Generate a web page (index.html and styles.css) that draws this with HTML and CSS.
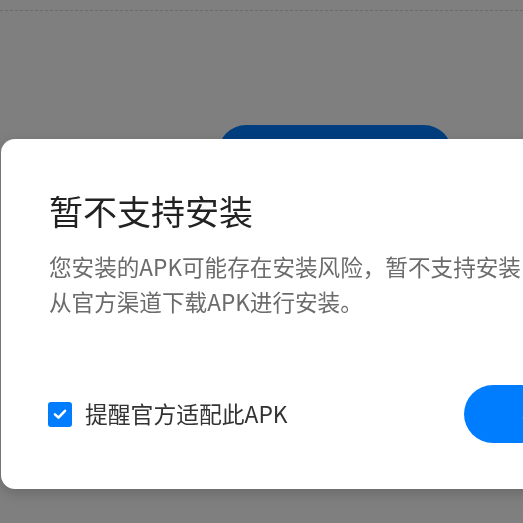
FILE: index.html
```html
<!DOCTYPE html>
<html lang="zh-CN">
<head>
<meta charset="utf-8">
<link rel="stylesheet" href="styles.css">
</head>
<body>
<div class="page">
  <div class="divider"></div>
  <div class="bg-button"></div>
</div>
<div class="overlay"></div>
<div class="dialog">
  <h1 class="title">暂不支持安装</h1>
  <p class="message">
    <span class="line">您安装的APK可能存在安装风险，暂不支持安装，建议您</span>
    <span class="line">从官方渠道下载APK进行安装。</span>
  </p>
  <div class="footer">
    <label class="check">
      <span class="box">
        <svg width="16" height="16" viewBox="0 0 16 16"><path d="M3 8.4 L6.5 11.6 L13 4.8" fill="none" stroke="#fff" stroke-width="2.6" stroke-linecap="round" stroke-linejoin="round"/></svg>
      </span>
      <span class="check-label">提醒官方适配此APK</span>
    </label>
    <button class="primary">我知道了</button>
  </div>
</div>
</body>
</html>
```
FILE: styles.css
```css
html, body {
  margin: 0;
  padding: 0;
  width: 523px;
  height: 523px;
  overflow: hidden;
  background: #ffffff;
  font-family: "Noto Sans CJK SC", "Noto Sans", sans-serif;
}
.page {
  display: flex;
  flex-direction: column;
  padding-top: 10px;
}
.divider {
  border-top: 1px dashed #d4d4d4;
  width: 100%;
}
.bg-button {
  margin-top: 114px;
  margin-left: 218px;
  width: 234px;
  height: 56px;
  border-radius: 28px;
  background: #007dff;
}
.overlay {
  position: fixed;
  inset: 0;
  background: rgba(0, 0, 0, 0.5);
}
.dialog {
  position: absolute;
  left: 1px;
  top: 139px;
  width: 606px;
  padding: 48px 47px 46px 47px;
  background: #ffffff;
  border-radius: 14px;
  box-shadow: 0 4px 14px rgba(0, 0, 0, 0.18);
}
.title {
  margin: 0;
  font-size: 34px;
  line-height: 48px;
  font-weight: 400;
  color: #222222;
  padding-left: 1px;
}
.message {
  margin: 14px 0 0 0;
  font-size: 22.6px;
  line-height: 35px;
  color: #6b6b6b;
  padding-left: 1px;
}
.line {
  display: block;
  white-space: nowrap;
}
.footer {
  margin-top: 66px;
  display: flex;
  align-items: center;
}
.check {
  flex: 1;
  display: flex;
  align-items: center;
  gap: 13px;
}
.box {
  width: 24px;
  height: 25px;
  border-radius: 3px;
  background: #007dff;
  display: flex;
  align-items: center;
  justify-content: center;
}
.box svg {
  display: block;
}
.check-label {
  font-size: 22.8px;
  line-height: 30px;
  color: #333333;
}
.primary {
  width: 190px;
  height: 58px;
  border: none;
  border-radius: 29px;
  background: #007dff;
  color: #ffffff;
  font-family: "Noto Sans CJK SC", "Noto Sans", sans-serif;
  font-size: 20px;
  font-weight: 500;
  padding: 0 0 0 6px;
}
```
